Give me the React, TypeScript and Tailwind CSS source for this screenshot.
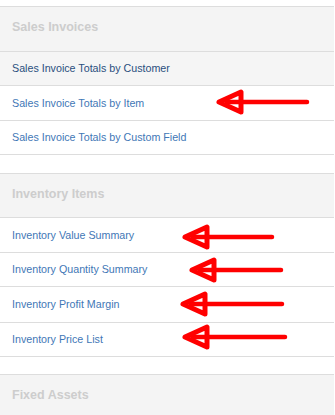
import React from "react";

type Row = { label: string; hover?: boolean; h: number };

function Header({ title, h }: { title: string; h: number }) {
  return (
    <div
      className="bg-[#f4f4f4] border-t border-[#dddddd] pl-3 pt-[13px] text-[12.5px] leading-[14px] font-bold text-[#cdcdcd]"
      style={{ height: h }}
    >
      {title}
    </div>
  );
}

function Item({ row }: { row: Row }) {
  return (
    <div
      className={
        "border-t border-[#dddddd] pl-3 flex items-center text-[10.7px] " +
        (row.hover ? "bg-[#f5f5f5] text-[#2a4f7e]" : "bg-white text-[#3f77b6]")
      }
      style={{ height: row.h }}
    >
      {row.label}
    </div>
  );
}

function Arrow({ tx, ty, ex }: { tx: number; ty: number; ex: number }) {
  const bx = tx + 22;
  return (
    <g>
      <line x1={tx + 8} y1={ty} x2={ex} y2={ty} stroke="#ff0000" strokeWidth={4.5} strokeLinecap="round" />
      <polygon
        points={`${tx},${ty} ${bx},${ty - 10} ${bx},${ty + 10}`}
        fill="#ffffff"
        stroke="#ff0000"
        strokeWidth={5}
        strokeLinejoin="round"
      />
      <line x1={tx + 6} y1={ty} x2={bx + 2} y2={ty} stroke="#ff0000" strokeWidth={4.5} />
    </g>
  );
}

export default function App() {
  const sales: Row[] = [
    { label: "Sales Invoice Totals by Customer", hover: true, h: 34 },
    { label: "Sales Invoice Totals by Item", h: 35 },
    { label: "Sales Invoice Totals by Custom Field", h: 34 },
  ];
  const inv: Row[] = [
    { label: "Inventory Value Summary", h: 35 },
    { label: "Inventory Quantity Summary", h: 34 },
    { label: "Inventory Profit Margin", h: 36 },
    { label: "Inventory Price List", h: 34 },
  ];
  return (
    <div
      className="relative w-[335px] h-[415px] overflow-hidden bg-white"
      style={{ fontFamily: '"Liberation Sans", Arial, sans-serif' }}
    >
      <div className="pt-[6px] w-[334px]">
        <Header title="Sales Invoices" h={45} />
        {sales.map((r) => (
          <Item key={r.label} row={r} />
        ))}
        <div className="border-t border-[#dddddd] h-[19px]" />
        <Header title="Inventory Items" h={44} />
        {inv.map((r) => (
          <Item key={r.label} row={r} />
        ))}
        <div className="border-t border-[#dddddd] h-[18px]" />
        <Header title="Fixed Assets" h={60} />
      </div>
      <svg className="absolute left-0 top-0" width={335} height={415}>
        <Arrow tx={219} ty={102} ex={307} />
        <Arrow tx={185} ty={237} ex={272} />
        <Arrow tx={192} ty={270} ex={281} />
        <Arrow tx={183} ty={304} ex={282} />
        <Arrow tx={185} ty={337} ex={285} />
      </svg>
    </div>
  );
}
